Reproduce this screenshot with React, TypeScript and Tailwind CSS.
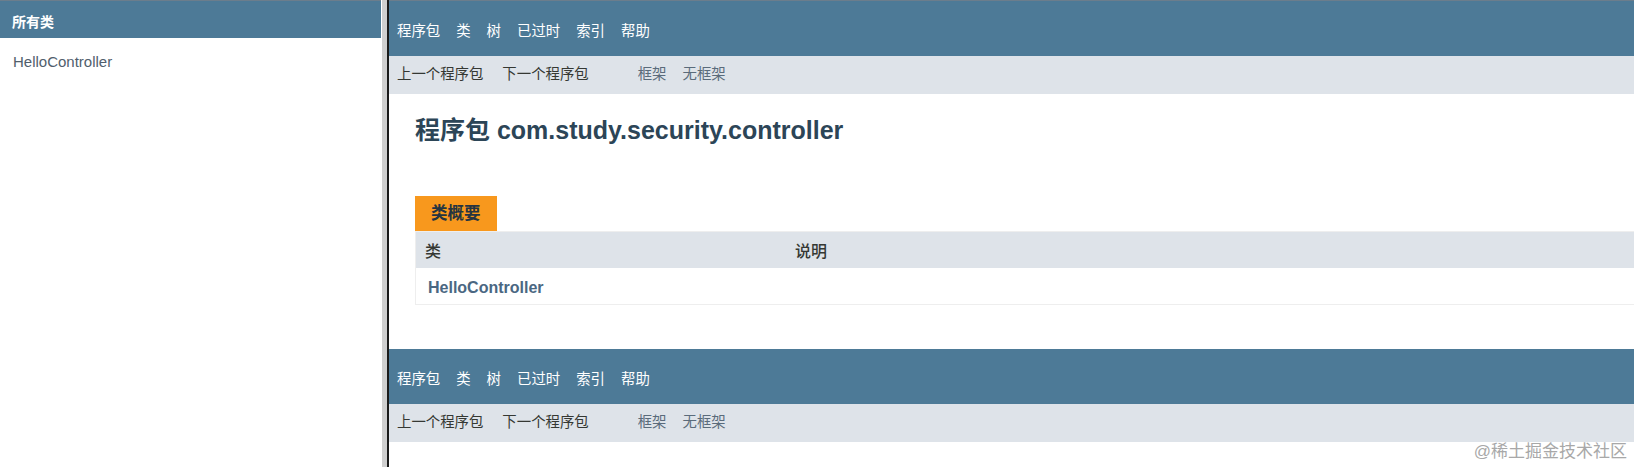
import React from "react"

const font = { fontFamily: '"Liberation Sans", "Noto Sans CJK SC", sans-serif' }

const navItems = ["程序包", "类", "树", "已过时", "索引", "帮助"]

function TopNav() {
	return (
		<div className="h-[55px] bg-[#4d7a97] flex items-end pb-[16px] pl-[8px]">
			{navItems.map((item) => (
				<span key={item} className="text-white text-[14.4px] leading-[18px] mr-[16px]">
					{item}
				</span>
			))}
		</div>
	)
}

function SubNav() {
	return (
		<div className="h-[38px] bg-[#dee3e9] flex items-center pb-[3px] pl-[8px] text-[14.4px] leading-[18px]">
			<span className="text-[#353833] mr-[19px]">上一个程序包</span>
			<span className="text-[#353833] mr-[49px]">下一个程序包</span>
			<a href="#" className="text-[#5a6b7b] mr-[16px]">
				框架
			</a>
			<a href="#" className="text-[#5a6b7b]">
				无框架
			</a>
		</div>
	)
}

function App() {
	return (
		<div className="relative w-[1634px] h-[467px] flex bg-white overflow-hidden" style={font}>
			{/* Left frame */}
			<div className="w-[381px] flex flex-col">
				<div className="h-[1px] bg-[#6b7d8c]"></div>
				<div className="h-[37px] bg-[#4d7a97] flex items-center pt-[5px] pl-[12px]">
					<span className="text-white font-bold text-[14px]">所有类</span>
				</div>
				<div className="pl-[13px] pt-[12px]">
					<a href="#" className="text-[#505e6c] text-[15px] leading-[18px]">
						HelloController
					</a>
				</div>
			</div>

			{/* Frame divider */}
			<div className="w-[1px] bg-white"></div>
			<div className="w-[5px] bg-[#cfcfcf]"></div>
			<div className="w-[2px] bg-[#1a1a1a]"></div>

			{/* Right frame */}
			<div className="flex-1 flex flex-col">
				<div className="h-[1px] bg-[#6b7d8c]"></div>
				<TopNav />
				<SubNav />

				<div className="pl-[26px] pt-[21px]">
					<h1 className="text-[25px] leading-[30px] font-bold text-[#2c4557]">
						程序包 com.study.security.controller
					</h1>

					<div className="mt-[51px]">
						<div className="inline-flex h-[35px] items-center bg-[#f8981d] px-[16px] font-bold text-[16.5px] text-[#253441]">
							类概要
						</div>
						<div className="border border-[#eeeeee] border-r-0">
							<div className="flex h-[36px] items-center pt-[4px] bg-[#dee3e9] text-[16px] font-medium text-[#353833]">
								<div className="w-[379px] pl-[9px]">类</div>
								<div>说明</div>
							</div>
							<div className="flex h-[36px] items-center pt-[4px] bg-white">
								<a href="#" className="pl-[12px] text-[16px] font-bold text-[#4a6782]">
									HelloController
								</a>
							</div>
						</div>
					</div>
				</div>

				<div className="mt-[44px]">
					<TopNav />
					<SubNav />
				</div>
			</div>

			{/* Watermark */}
			<div className="absolute right-[7px] bottom-[4px] text-[17px] leading-[22px] text-[#a8a8a8]">
				@稀土掘金技术社区
			</div>
		</div>
	)
}

export default App
